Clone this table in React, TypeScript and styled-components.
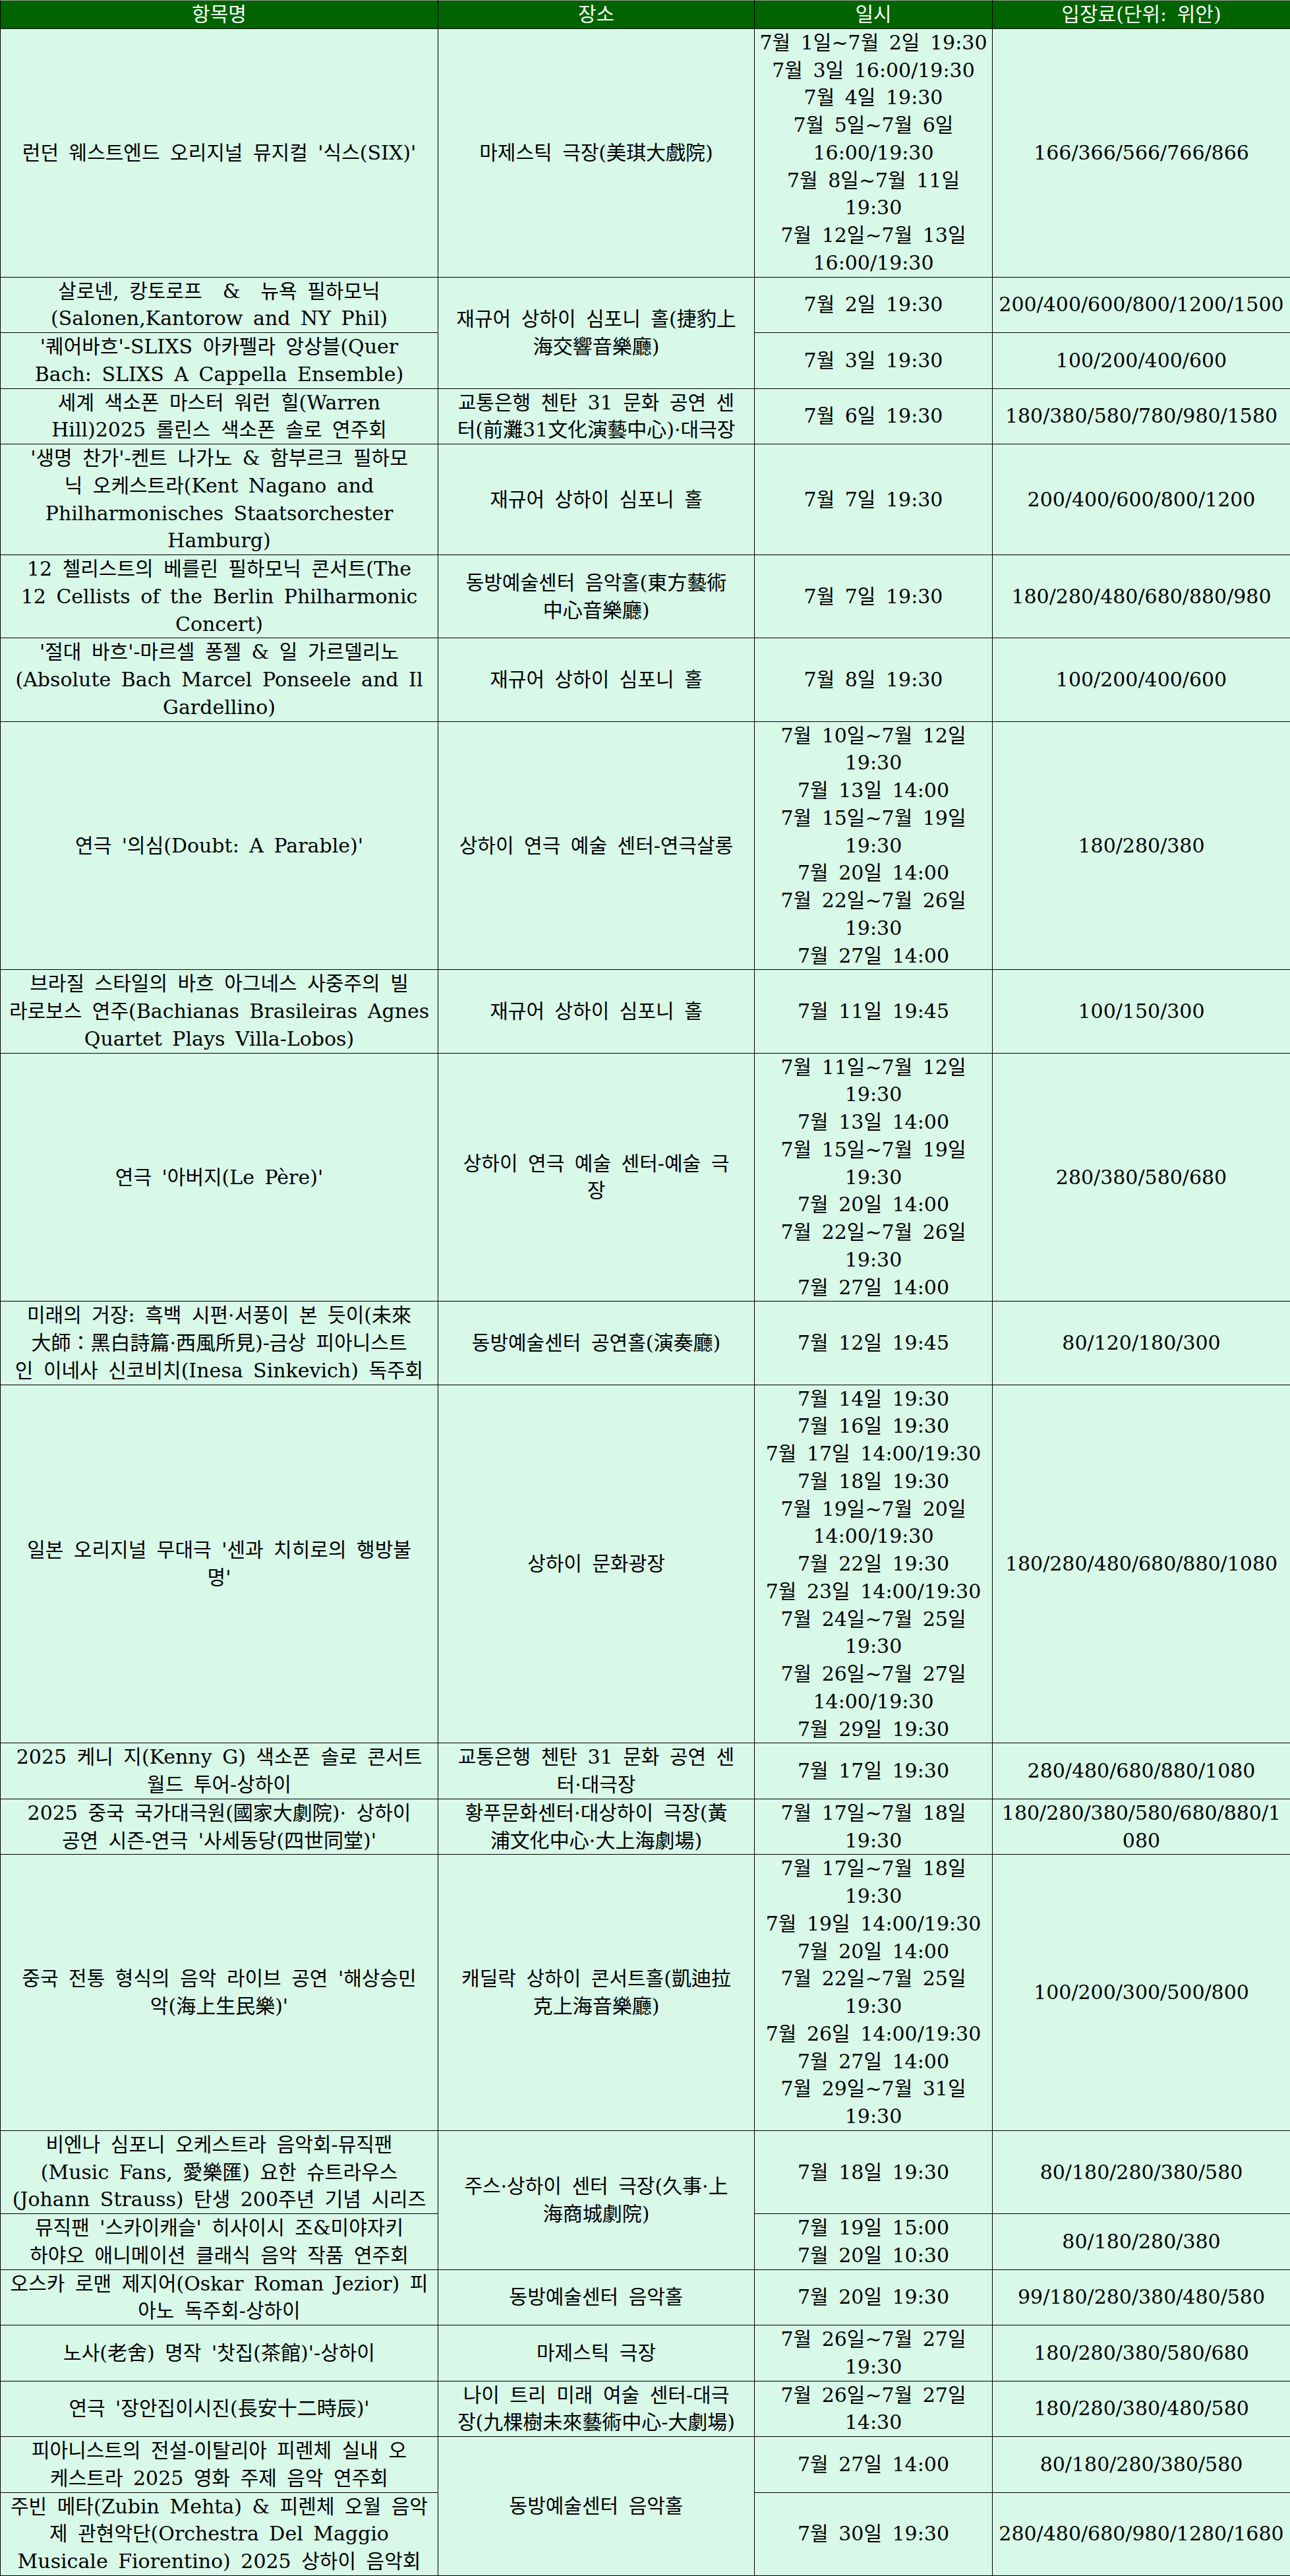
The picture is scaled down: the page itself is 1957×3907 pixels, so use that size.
import styled, { createGlobalStyle } from 'styled-components';

const GlobalStyle = createGlobalStyle`
    html, body {
        margin: 0;
        padding: 0;
        background: #ffffff;
    }
`

const Sheet = styled.table`
    width: 1957px;
    border-collapse: collapse;
    table-layout: fixed;
    font-family: "DejaVu Serif", "Noto Sans CJK KR", serif;
    font-size: 30px;
    line-height: 41.75px;
    word-spacing: 6px;
    color: #000;
`

const Column = styled.col`
    width: ${props => props.$w}px;
`

const HeadCell = styled.th`
    background: #006400;
    color: #ffffff;
    font-weight: normal;
    text-align: center;
    vertical-align: middle;
    padding: 0;
    border: 1px solid #000;
    border-top-color: #9a9a9a;
`

const Cell = styled.td`
    background: #d8f8e8;
    text-align: center;
    vertical-align: middle;
    padding: 0;
    border: 1px solid #000;
`

const Line = styled.div`
    white-space: pre;
`

type Show = {
    title: string[]
    place?: string[]
    placeSpan?: number
    dates: string[]
    price: string[]
}

const shows: Show[] = [
    {
        title: ["런던 웨스트엔드 오리지널 뮤지컬 '식스(SIX)'"],
        place: ['마제스틱 극장(美琪大戲院)'],
        dates: ['7월 1일~7월 2일 19:30', '7월 3일 16:00/19:30', '7월 4일 19:30', '7월 5일~7월 6일', '16:00/19:30', '7월 8일~7월 11일', '19:30', '7월 12일~7월 13일', '16:00/19:30'],
        price: ['166/366/566/766/866'],
    },
    {
        title: ['살로넨, 캉토로프  &  뉴욕 필하모닉', '(Salonen,Kantorow and NY Phil)'],
        place: ['재규어 상하이 심포니 홀(捷豹上', '海交響音樂廳)'],
        placeSpan: 2,
        dates: ['7월 2일 19:30'],
        price: ['200/400/600/800/1200/1500'],
    },
    {
        title: ["'퀘어바흐'-SLIXS 아카펠라 앙상블(Quer", 'Bach: SLIXS A Cappella Ensemble)'],
        dates: ['7월 3일 19:30'],
        price: ['100/200/400/600'],
    },
    {
        title: ['세계 색소폰 마스터 워런 힐(Warren', 'Hill)2025 롤린스 색소폰 솔로 연주회'],
        place: ['교통은행 첸탄 31 문화 공연 센', '터(前灘31文化演藝中心)·대극장'],
        dates: ['7월 6일 19:30'],
        price: ['180/380/580/780/980/1580'],
    },
    {
        title: ["'생명 찬가'-켄트 나가노 & 함부르크 필하모", '닉 오케스트라(Kent Nagano and', 'Philharmonisches Staatsorchester', 'Hamburg)'],
        place: ['재규어 상하이 심포니 홀'],
        dates: ['7월 7일 19:30'],
        price: ['200/400/600/800/1200'],
    },
    {
        title: ['12 첼리스트의 베를린 필하모닉 콘서트(The', '12 Cellists of the Berlin Philharmonic', 'Concert)'],
        place: ['동방예술센터 음악홀(東方藝術', '中心音樂廳)'],
        dates: ['7월 7일 19:30'],
        price: ['180/280/480/680/880/980'],
    },
    {
        title: ["'절대 바흐'-마르셀 퐁젤 & 일 가르델리노", '(Absolute Bach Marcel Ponseele and Il', 'Gardellino)'],
        place: ['재규어 상하이 심포니 홀'],
        dates: ['7월 8일 19:30'],
        price: ['100/200/400/600'],
    },
    {
        title: ["연극 '의심(Doubt: A Parable)'"],
        place: ['상하이 연극 예술 센터-연극살롱'],
        dates: ['7월 10일~7월 12일', '19:30', '7월 13일 14:00', '7월 15일~7월 19일', '19:30', '7월 20일 14:00', '7월 22일~7월 26일', '19:30', '7월 27일 14:00'],
        price: ['180/280/380'],
    },
    {
        title: ['브라질 스타일의 바흐 아그네스 사중주의 빌', '라로보스 연주(Bachianas Brasileiras Agnes', 'Quartet Plays Villa-Lobos)'],
        place: ['재규어 상하이 심포니 홀'],
        dates: ['7월 11일 19:45'],
        price: ['100/150/300'],
    },
    {
        title: ["연극 '아버지(Le Père)'"],
        place: ['상하이 연극 예술 센터-예술 극', '장'],
        dates: ['7월 11일~7월 12일', '19:30', '7월 13일 14:00', '7월 15일~7월 19일', '19:30', '7월 20일 14:00', '7월 22일~7월 26일', '19:30', '7월 27일 14:00'],
        price: ['280/380/580/680'],
    },
    {
        title: ['미래의 거장: 흑백 시편·서풍이 본 듯이(未來', '大師：黑白詩篇·西風所見)-금상 피아니스트', '인 이네사 신코비치(Inesa Sinkevich) 독주회'],
        place: ['동방예술센터 공연홀(演奏廳)'],
        dates: ['7월 12일 19:45'],
        price: ['80/120/180/300'],
    },
    {
        title: ["일본 오리지널 무대극 '센과 치히로의 행방불", "명'"],
        place: ['상하이 문화광장'],
        dates: ['7월 14일 19:30', '7월 16일 19:30', '7월 17일 14:00/19:30', '7월 18일 19:30', '7월 19일~7월 20일', '14:00/19:30', '7월 22일 19:30', '7월 23일 14:00/19:30', '7월 24일~7월 25일', '19:30', '7월 26일~7월 27일', '14:00/19:30', '7월 29일 19:30'],
        price: ['180/280/480/680/880/1080'],
    },
    {
        title: ['2025 케니 지(Kenny G) 색소폰 솔로 콘서트', '월드 투어-상하이'],
        place: ['교통은행 첸탄 31 문화 공연 센', '터·대극장'],
        dates: ['7월 17일 19:30'],
        price: ['280/480/680/880/1080'],
    },
    {
        title: ['2025 중국 국가대극원(國家大劇院)· 상하이', "공연 시즌-연극 '사세동당(四世同堂)'"],
        place: ['황푸문화센터·대상하이 극장(黃', '浦文化中心·大上海劇場)'],
        dates: ['7월 17일~7월 18일', '19:30'],
        price: ['180/280/380/580/680/880/1', '080'],
    },
    {
        title: ["중국 전통 형식의 음악 라이브 공연 '해상승민", "악(海上生民樂)'"],
        place: ['캐딜락 상하이 콘서트홀(凱迪拉', '克上海音樂廳)'],
        dates: ['7월 17일~7월 18일', '19:30', '7월 19일 14:00/19:30', '7월 20일 14:00', '7월 22일~7월 25일', '19:30', '7월 26일 14:00/19:30', '7월 27일 14:00', '7월 29일~7월 31일', '19:30'],
        price: ['100/200/300/500/800'],
    },
    {
        title: ['비엔나 심포니 오케스트라 음악회-뮤직팬', '(Music Fans, 愛樂匯) 요한 슈트라우스', '(Johann Strauss) 탄생 200주년 기념 시리즈'],
        place: ['주스·상하이 센터 극장(久事·上', '海商城劇院)'],
        placeSpan: 2,
        dates: ['7월 18일 19:30'],
        price: ['80/180/280/380/580'],
    },
    {
        title: ["뮤직팬 '스카이캐슬' 히사이시 조&미야자키", '하야오 애니메이션 클래식 음악 작품 연주회'],
        dates: ['7월 19일 15:00', '7월 20일 10:30'],
        price: ['80/180/280/380'],
    },
    {
        title: ['오스카 로맨 제지어(Oskar Roman Jezior) 피', '아노 독주회-상하이'],
        place: ['동방예술센터 음악홀'],
        dates: ['7월 20일 19:30'],
        price: ['99/180/280/380/480/580'],
    },
    {
        title: ["노사(老舍) 명작 '찻집(茶館)'-상하이"],
        place: ['마제스틱 극장'],
        dates: ['7월 26일~7월 27일', '19:30'],
        price: ['180/280/380/580/680'],
    },
    {
        title: ["연극 '장안집이시진(長安十二時辰)'"],
        place: ['나이 트리 미래 여술 센터-대극', '장(九棵樹未來藝術中心-大劇場)'],
        dates: ['7월 26일~7월 27일', '14:30'],
        price: ['180/280/380/480/580'],
    },
    {
        title: ['피아니스트의 전설-이탈리아 피렌체 실내 오', '케스트라 2025 영화 주제 음악 연주회'],
        place: ['동방예술센터 음악홀'],
        placeSpan: 2,
        dates: ['7월 27일 14:00'],
        price: ['80/180/280/380/580'],
    },
    {
        title: ['주빈 메타(Zubin Mehta) & 피렌체 오월 음악', '제 관현악단(Orchestra Del Maggio', 'Musicale Fiorentino) 2025 상하이 음악회'],
        dates: ['7월 30일 19:30'],
        price: ['280/480/680/980/1280/1680'],
    },
]

function Lines({ items }: { items: string[] }) {
    return (
        <>
            {items.map((text, i) => <Line key={i}>{text}</Line>)}
        </>
    )
}

export default function App() {
    return (
        <>
            <GlobalStyle />
            <Sheet>
                <colgroup>
                    <Column $w={664} />
                    <Column $w={480} />
                    <Column $w={361} />
                    <Column $w={452} />
                </colgroup>
                <thead>
                    <tr>
                        <HeadCell>항목명</HeadCell>
                        <HeadCell>장소</HeadCell>
                        <HeadCell>일시</HeadCell>
                        <HeadCell>입장료(단위: 위안)</HeadCell>
                    </tr>
                </thead>
                <tbody>
                    {shows.map((show, i) => (
                        <tr key={i}>
                            <Cell><Lines items={show.title} /></Cell>
                            {show.place && (
                                <Cell rowSpan={show.placeSpan ?? 1}><Lines items={show.place} /></Cell>
                            )}
                            <Cell><Lines items={show.dates} /></Cell>
                            <Cell><Lines items={show.price} /></Cell>
                        </tr>
                    ))}
                </tbody>
            </Sheet>
        </>
    )
}
